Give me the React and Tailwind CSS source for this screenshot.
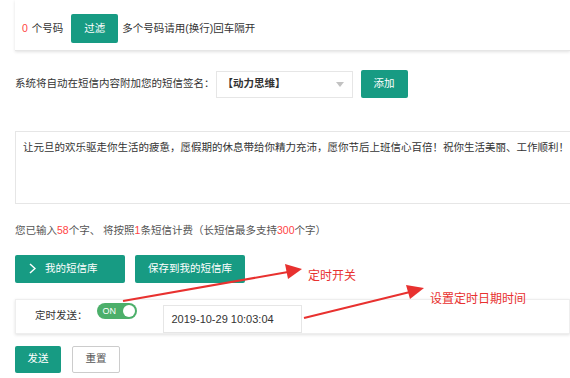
import { useState } from "react";

const font = { fontFamily: '"Liberation Sans", "Noto Sans CJK SC", sans-serif' };

const Annotations = () => (
    <>
        <svg
            className="absolute left-0 top-0 pointer-events-none"
            width="570"
            height="378"
            viewBox="0 0 570 378"
        >
            <line x1="123" y1="301" x2="288" y2="272" stroke="#e8312f" strokeWidth="2" />
            <polygon points="302,269 285,264 288,279" fill="#e8312f" />
            <line x1="304" y1="318" x2="410" y2="292" stroke="#e8312f" strokeWidth="2" />
            <polygon points="424,288 406,285 410,299" fill="#e8312f" />
        </svg>
        <span className="absolute left-[308px] top-[267px] text-[12px] text-[#e8312f]">定时开关</span>
        <span className="absolute left-[430px] top-[290px] text-[12px] text-[#e8312f]">设置定时日期时间</span>
    </>
);

export default function App() {
    const [on, setOn] = useState(true);
    const [text, setText] = useState(
        "让元旦的欢乐驱走你生活的疲惫，愿假期的休息带给你精力充沛，愿你节后上班信心百倍！祝你生活美丽、工作顺利！"
    );

    return (
        <div className="relative w-[570px] h-[378px] overflow-hidden bg-white text-[10.5px] text-[#333]" style={font}>
            <div className="pl-[15px]">
                <div className="flex items-center pl-[7px] pt-[14px] pb-[7px] bg-white shadow-[0_1px_3px_rgba(0,0,0,0.12)] border-b border-[#e6e6e6]">
                    <span className="text-[#f44]">0</span>
                    <span className="ml-[4px]">个号码</span>
                    <button className="ml-[8px] w-[47px] h-[29px] bg-[#179b83] text-white rounded-[2px]">过滤</button>
                    <span className="ml-[4px]">多个号码请用(换行)回车隔开</span>
                </div>

                <div className="flex items-center mt-[19px]">
                    <span>系统将自动在短信内容附加您的短信签名：</span>
                    <div className="ml-[1px] w-[137px] h-[27px] border border-[#e6e6e6] flex items-center justify-between pl-[6px] pr-[8px]">
                        <span className="font-bold">【动力思维】</span>
                        <svg width="8" height="5" viewBox="0 0 8 5">
                            <polygon points="0,0 8,0 4,5" fill="#c2c2c2" />
                        </svg>
                    </div>
                    <button className="ml-[8px] w-[47px] h-[28px] bg-[#179b83] text-white rounded-[2px]">添加</button>
                </div>

                <textarea
                    value={text}
                    onChange={(e) => setText(e.target.value)}
                    className="mt-[33px] block w-[580px] h-[73px] border border-[#e6e6e6] resize-none px-[7px] py-[5px] text-[10.5px] leading-[20px] outline-none"
                    style={font}
                />

                <div className="mt-[19px] text-[#555]">
                    您已输入<span className="text-[#f44]">58</span>个字、 将按照<span className="text-[#f44]">1</span>条短信计费（长短信最多支持<span className="text-[#f44]">300</span>个字）
                </div>

                <div className="flex mt-[16px] gap-[10px]">
                    <button className="w-[110px] h-[28px] bg-[#179b83] text-white rounded-[2px] flex items-center pl-[14px] gap-[9px]">
                        <svg width="7" height="11" viewBox="0 0 7 11">
                            <polyline points="1,1 6,5.5 1,10" fill="none" stroke="white" strokeWidth="1.5" />
                        </svg>
                        我的短信库
                    </button>
                    <button className="w-[110px] h-[28px] bg-[#179b83] text-white rounded-[2px]">保存到我的短信库</button>
                </div>

                <div className="mt-[16px] h-[35px] flex items-center bg-white shadow-[0_1px_3px_rgba(0,0,0,0.12)] border border-[#eee]">
                    <span className="ml-[19px]">定时发送：</span>
                    <button
                        onClick={() => setOn(!on)}
                        className={`ml-[9px] -mt-[10px] w-[40px] h-[16px] rounded-full flex items-center pl-[6px] pr-[2px] justify-between ${on ? "bg-[#4caf6a]" : "bg-[#ccc]"}`}
                    >
                        <span className="text-[9px] text-white leading-none">ON</span>
                        <span className="w-[12px] h-[12px] rounded-full bg-white"></span>
                    </button>
                    <div className="ml-[26px] mt-[6px] w-[139px] h-[28px] border border-[#e6e6e6] flex items-center pl-[8px] text-[11px] text-[#333]">
                        2019-10-29 10:03:04
                    </div>
                </div>

                <div className="flex mt-[12px] gap-[11px]">
                    <button className="w-[46px] h-[27px] bg-[#179b83] text-white rounded-[2px]">发送</button>
                    <button className="w-[48px] h-[27px] border border-[#ccc] bg-white text-[#555] rounded-[2px]">重置</button>
                </div>
            </div>
            <Annotations />
        </div>
    );
}
